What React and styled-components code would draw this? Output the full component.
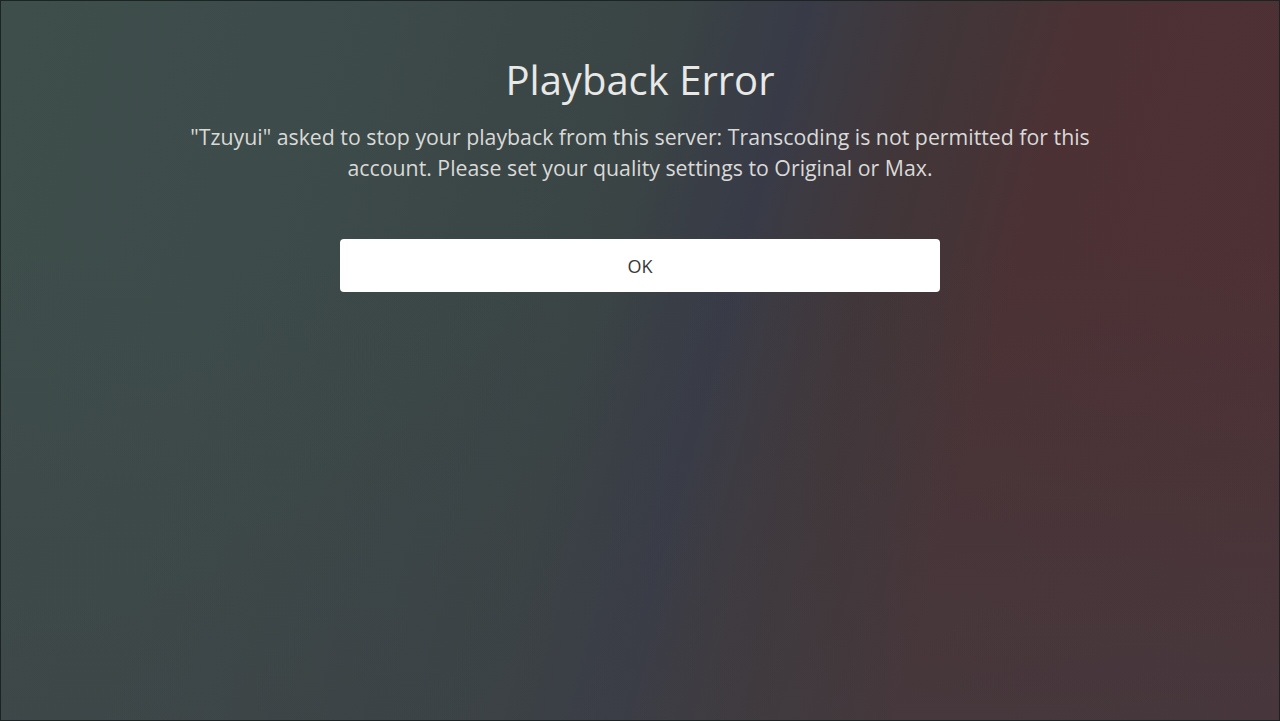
import styled, { createGlobalStyle } from 'styled-components';

const GlobalStyle = createGlobalStyle`
  html, body {
    margin: 0;
    padding: 0;
    height: 100%;
    background: #1b2222;
  }
  #root {
    height: 100%;
  }
`;

// full-screen backdrop: green-grey on the left, a slanted slate band, wine red on the right
const Screen = styled.div`
  box-sizing: border-box;
  height: 100vh;
  width: 100%;
  display: flex;
  flex-direction: column;
  align-items: center;
  padding-top: 56px;
  font-family: "Open Sans", "Noto Sans", sans-serif;
  box-shadow: inset 0 0 0 1px #1c2323;
  background:
    linear-gradient(180deg, rgba(62, 64, 70, 0) 35%, rgba(62, 64, 70, 0.45) 100%),
    linear-gradient(105deg,
      #3e4e4b 0%,
      #3d4c4a 20%,
      #3b4747 36%,
      #3a4445 46%,
      #393e46 51%,
      #383b47 55%,
      #3d3a42 58%,
      #413639 64%,
      #453437 69%,
      #4c3134 74%,
      #4e3034 100%);
`;

const Title = styled.h1`
  margin: 0;
  font-size: 40px;
  line-height: 48px;
  font-weight: 400;
  color: #e8e8e6;
`;

const Message = styled.p`
  margin: 17px 0 0;
  text-align: center;
  font-size: 21.3px;
  line-height: 31px;
  color: #d9d9d7;
`;

const OkButton = styled.button`
  margin-top: 56px;
  width: 600px;
  height: 53px;
  border: none;
  border-radius: 4px;
  background: #ffffff;
  color: #383838;
  font-family: "Open Sans", "Noto Sans", sans-serif;
  font-size: 18px;
  cursor: pointer;
`;

export default function App() {
  return (
    <>
      <GlobalStyle />
      <Screen>
        <Title>Playback Error</Title>
        <Message>
          "Tzuyui" asked to stop your playback from this server: Transcoding is not permitted for this
          <br />
          account. Please set your quality settings to Original or Max.
        </Message>
        <OkButton>OK</OkButton>
      </Screen>
    </>
  );
}
